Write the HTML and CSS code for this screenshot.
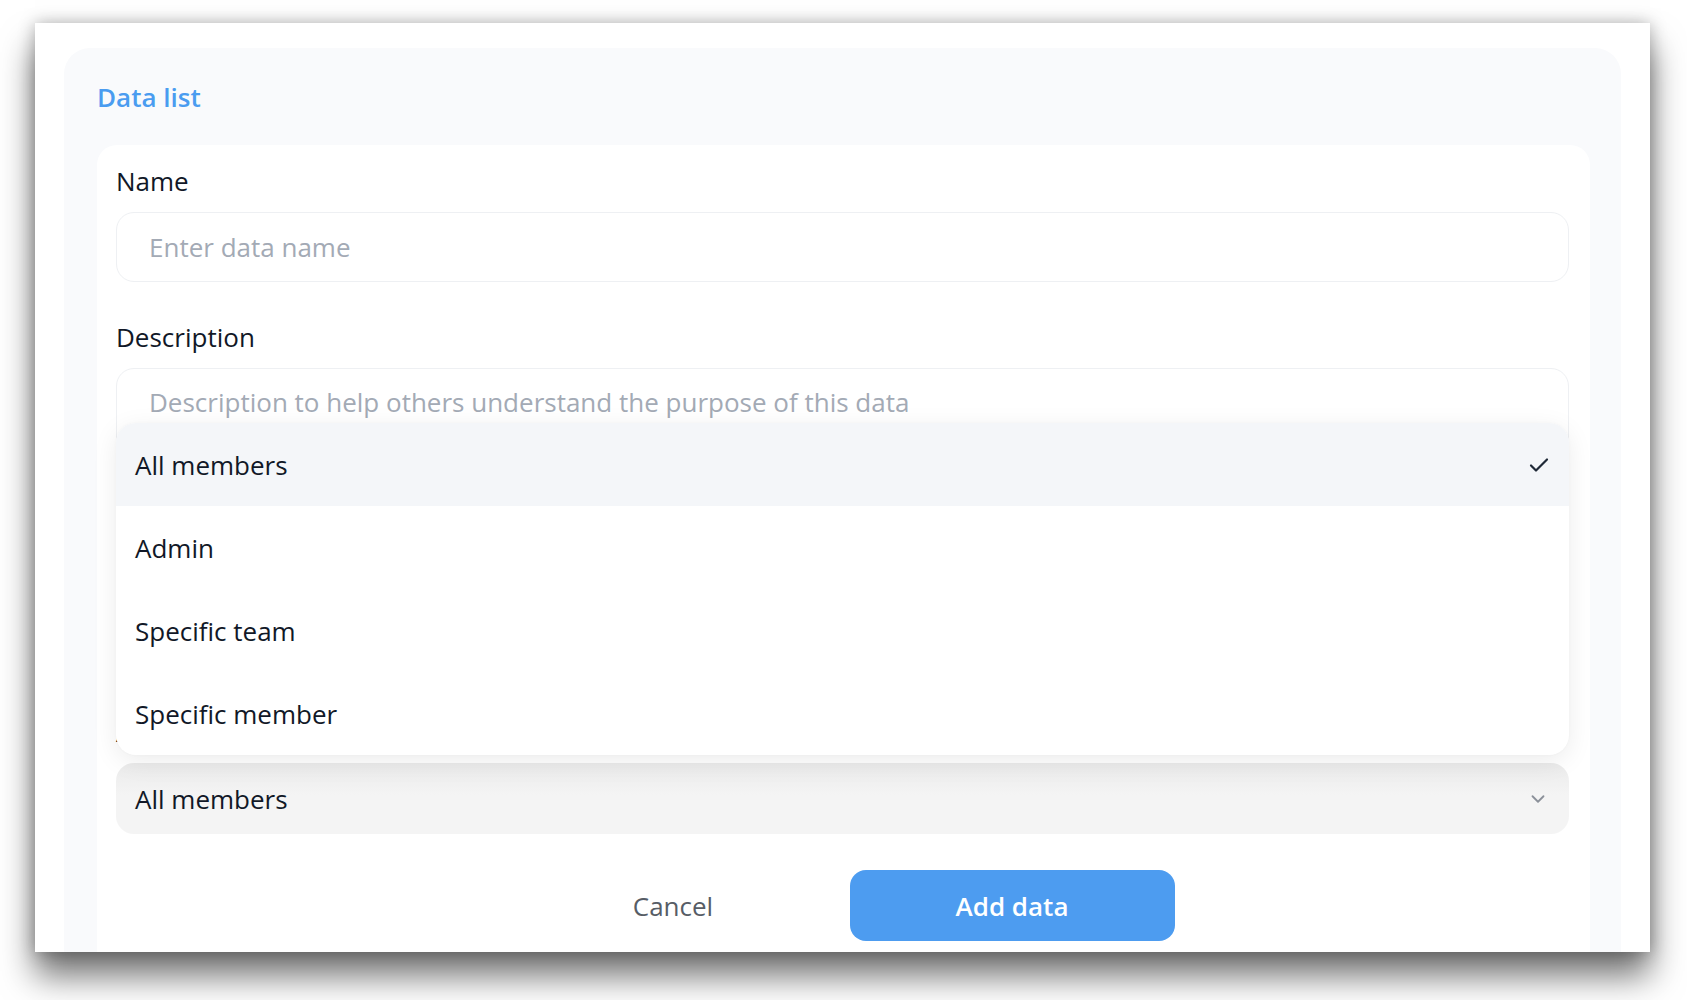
FILE: index.html
```html
<!DOCTYPE html>
<html lang="en">
<head>
  <meta charset="UTF-8" />
  <meta name="viewport" content="width=device-width, initial-scale=1.0"/>
  <title>Data list</title>
  <link rel="stylesheet" href="styles.css">
</head>
<body>

  <div class="window">
    <div class="panel">
      <h2 class="panel-title">Data list</h2>

      <div class="card">
        <div class="field">
          <label for="name">Name</label>
          <input id="name" type="text" placeholder="Enter data name">
        </div>

        <div class="field">
          <label for="desc">Description</label>
          <textarea id="desc" placeholder="Description to help others understand the purpose of this data"></textarea>
        </div>

        <div class="field access">
          <label>Access</label>
          <div class="select-wrap">
            <ul class="menu">
              <li class="menu-item active">
                <span>All members</span>
                <svg width="24" height="24" viewBox="0 0 24 24" fill="none" stroke="#1f2937" stroke-width="2.2" stroke-linecap="round" stroke-linejoin="round"><polyline points="4 12.5 9 17.5 20 6.5"/></svg>
              </li>
              <li class="menu-item"><span>Admin</span></li>
              <li class="menu-item"><span>Specific team</span></li>
              <li class="menu-item"><span>Specific member</span></li>
            </ul>
            <div class="select">
              <span>All members</span>
              <svg width="22" height="22" viewBox="0 0 24 24" fill="none" stroke="#8b9099" stroke-width="2" stroke-linecap="round" stroke-linejoin="round"><polyline points="6 9 12 15 18 9"/></svg>
            </div>
          </div>
        </div>

        <div class="actions">
          <button class="btn btn-cancel">Cancel</button>
          <button class="btn btn-primary">Add data</button>
        </div>
      </div>
    </div>
  </div>

</body>
</html>
```

FILE: styles.css
```css
* {
  box-sizing: border-box;
}

body {
  margin: 0;
  background: #fff;
  font-family: 'Open Sans', 'Noto Sans', sans-serif;
  color: #111827;
}

.window {
  margin: 23px 0 48px 35px;
  width: 1615px;
  height: 929px;
  background: #fff;
  overflow: hidden;
  box-shadow: 0 24px 32px rgba(0,0,0,0.55), 0 0 16px rgba(0,0,0,0.28);
}

.panel {
  margin: 25px 29px 0 29px;
  padding: 31px 31px 40px 33px;
  background: #f9fafc;
  border-radius: 26px;
}

.panel-title {
  margin: 0 0 30px;
  font-size: 26px;
  line-height: 36px;
  font-weight: 600;
  color: #4a9cf0;
}

.card {
  background: #fff;
  border-radius: 20px;
  padding: 21px 21px 60px 19px;
}

.field {
  margin-bottom: 40px;
}

.field.access {
  margin-bottom: 36px;
}

.field label {
  display: block;
  font-size: 26px;
  line-height: 30px;
  font-weight: 500;
  margin-bottom: 16px;
}

.field input,
.field textarea {
  display: block;
  width: 100%;
  height: 70px;
  border: 1px solid #eef0f3;
  border-radius: 18px;
  background: #fff;
  padding: 0 32px;
  font-family: inherit;
  font-size: 26px;
  color: #111827;
  outline: none;
}

.field textarea {
  height: 309px;
  padding-top: 18px;
  line-height: 30px;
  resize: none;
}

::placeholder {
  color: #a3aab5;
}

.select-wrap {
  position: relative;
}

.select {
  height: 71px;
  border-radius: 18px;
  background: linear-gradient(#ebebeb, #f4f4f4 45%);
  padding: 0 20px 0 19px;
  display: flex;
  align-items: center;
  justify-content: space-between;
  font-size: 26px;
}

.menu {
  position: absolute;
  left: 0;
  right: 0;
  bottom: calc(100% + 8px);
  margin: 0;
  padding: 0;
  list-style: none;
  background: #fff;
  border-radius: 20px;
  overflow: hidden;
  box-shadow: 0 6px 26px rgba(0,0,0,0.08), 0 0 3px rgba(0,0,0,0.03);
  z-index: 2;
}

.menu-item {
  height: 83px;
  padding: 0 18px 0 19px;
  display: flex;
  align-items: center;
  justify-content: space-between;
  font-size: 26px;
}

.menu-item.active {
  background: #f4f6f9;
}

.actions {
  display: flex;
  justify-content: center;
  gap: 14px;
}

.btn {
  width: 325px;
  height: 71px;
  border: none;
  border-radius: 16px;
  font-family: inherit;
  font-size: 26px;
  font-weight: 600;
  cursor: pointer;
}

.btn-cancel {
  background: transparent;
  color: #575d66;
  font-weight: 500;
}

.btn-primary {
  background: #4d9cf0;
  color: #fff;
}
```
